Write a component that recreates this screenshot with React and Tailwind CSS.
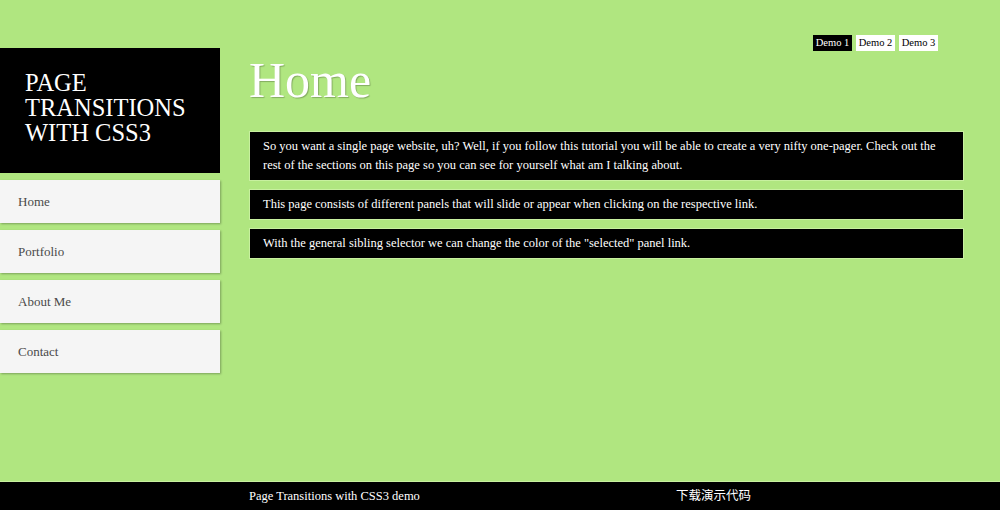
import { useState } from 'react';

const serif = { fontFamily: '"Liberation Serif", "Noto Sans CJK SC", serif' };

const demos = ['Demo 1', 'Demo 2', 'Demo 3'];
const links = ['Home', 'Portfolio', 'About Me', 'Contact'];

function App() {
  const [active, setActive] = useState('Home');

  return (
    <div className="h-[510px] w-full bg-[#b0e680] flex flex-col overflow-hidden" style={serif}>
      {/* Demo links */}
      <div className="h-[48px] flex justify-end items-start pt-[35px] pr-[62px] gap-[4px]">
        {demos.map((d, i) => (
          <a
            key={d}
            href="#"
            className={`w-[39px] text-center text-[10.5px] leading-[16px] ${i === 0 ? 'bg-black text-white' : 'bg-white text-black'}`}
          >
            {d}
          </a>
        ))}
      </div>

      <div className="flex flex-1">
        {/* Sidebar */}
        <div className="w-[220px] shrink-0 flex flex-col">
          <div className="bg-black h-[125px] pl-[25px] pt-[22px]">
            <h1 className="text-white text-[24.5px] leading-[25px] uppercase">
              Page<br />Transitions<br />with CSS3
            </h1>
          </div>
          <nav className="flex flex-col gap-[7px] mt-[7px]">
            {links.map((l) => (
              <a
                key={l}
                href="#"
                onClick={() => setActive(l)}
                className="h-[43px] bg-[#f5f5f5] flex items-center pl-[18px] text-[13px] text-[#4a4a4a] shadow-[1px_1px_2px_rgba(0,0,0,0.3)]"
              >
                {l}
              </a>
            ))}
          </nav>
        </div>

        {/* Content */}
        <div className="flex-1 pl-[29px] pr-[36px]">
          <h2 className="text-white text-[50px] leading-[54px] mt-[5px] [text-shadow:1px_1px_1px_rgba(0,0,0,0.25)]">
            {active}
          </h2>
          <div className="flex flex-col gap-[8px] mt-[24px]">
            <p className="bg-black text-white text-[12.5px] leading-[19px] px-[13px] py-[5px] border border-[#c8f0a0]">
              So you want a single page website, uh? Well, if you follow this tutorial you will be able to create a very nifty one-pager. Check out the rest of the sections on this page so you can see for yourself what am I talking about.
            </p>
            <p className="bg-black text-white text-[12.5px] leading-[19px] px-[13px] py-[5px] border border-[#c8f0a0]">
              This page consists of different panels that will slide or appear when clicking on the respective link.
            </p>
            <p className="bg-black text-white text-[12.5px] leading-[19px] px-[13px] py-[5px] border border-[#c8f0a0]">
              With the general sibling selector we can change the color of the "selected" panel link.
            </p>
          </div>
        </div>
      </div>

      {/* Footer */}
      <footer className="h-[29px] bg-black border-t border-[#c8f0a0] flex items-center text-white text-[12.5px]">
        <span className="ml-[249px]">Page Transitions with CSS3 demo</span>
        <span className="ml-[256px]">下载演示代码</span>
      </footer>
    </div>
  );
}

export default App;
